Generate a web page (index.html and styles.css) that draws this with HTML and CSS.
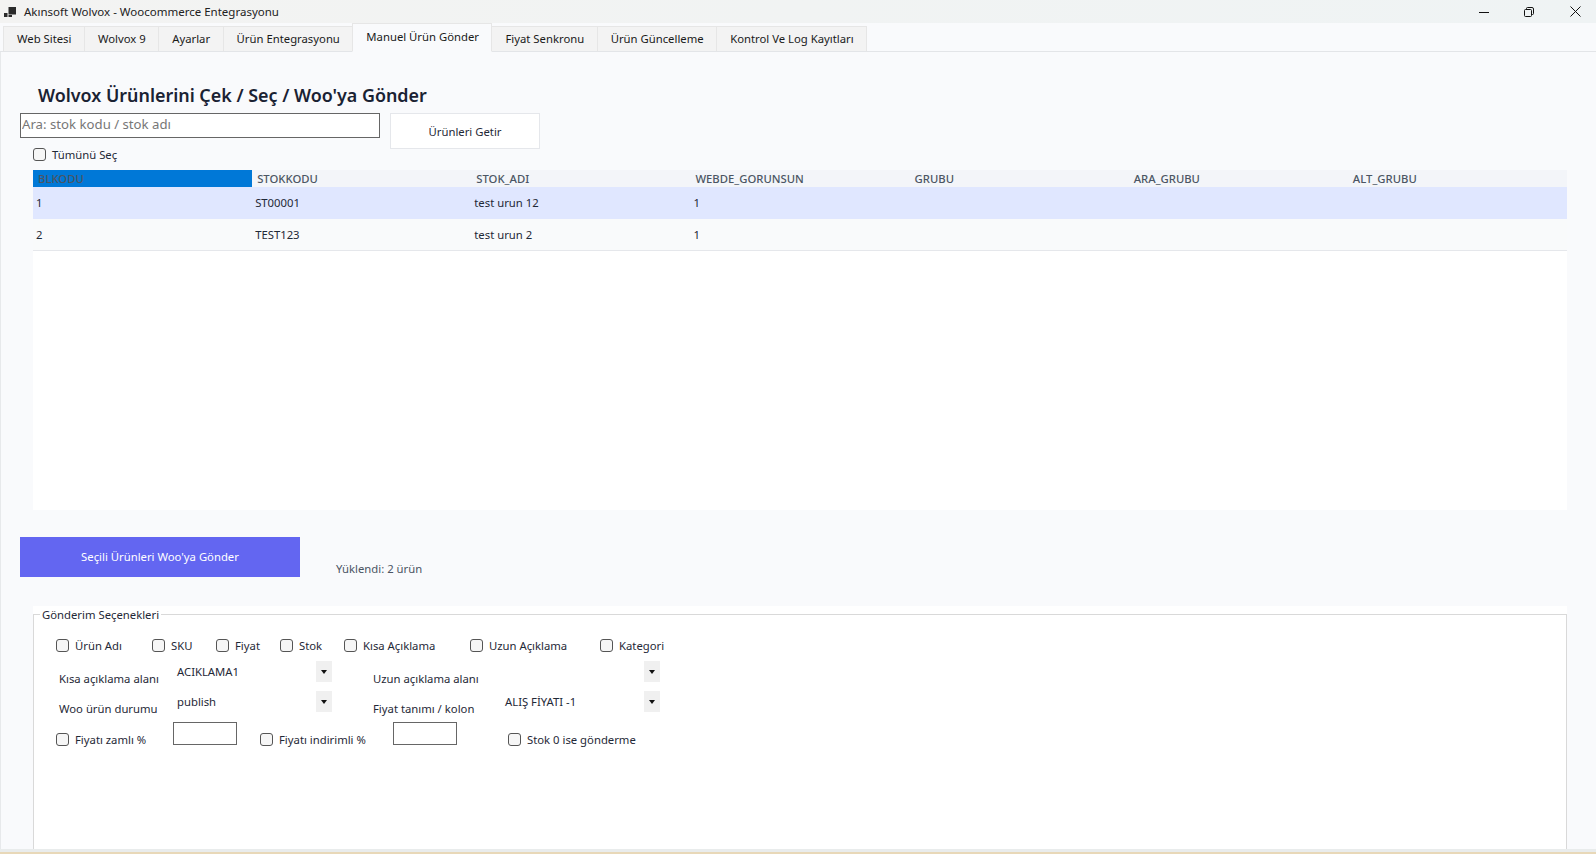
FILE: index.html
```html
<!DOCTYPE html>
<html>
<head>
  <meta charset="utf-8">
  <title>Akınsoft Wolvox - Woocommerce Entegrasyonu</title>
  <link rel="stylesheet" href="styles.css">
</head>
<body>
  <div class="window">
    <div class="titlebar">
      <svg class="app-icon" width="12" height="10" viewBox="0 0 12 10">
        <rect x="0" y="6" width="3.5" height="4" fill="#2b2b2b"/>
        <rect x="4.5" y="0" width="7.5" height="7.5" fill="#2b2b2b"/>
        <rect x="4.5" y="8" width="3.5" height="2" fill="#2b2b2b"/>
      </svg>
      <span class="title-text">Akınsoft Wolvox - Woocommerce Entegrasyonu</span>
      <div class="win-buttons">
        <svg width="10" height="10" viewBox="0 0 10 10"><path d="M0 5.5H10" stroke="#111" fill="none"/></svg>
        <svg width="10" height="10" viewBox="0 0 10 10"><path d="M2.5 2V1.5Q2.5 .5 3.5 .5H8Q9.5 .5 9.5 2V6.5Q9.5 7.5 8.5 7.5H8M1.5 2.5H6.5Q7.5 2.5 7.5 3.5V8.5Q7.5 9.5 6.5 9.5H1.5Q.5 9.5 .5 8.5V3.5Q.5 2.5 1.5 2.5Z" stroke="#111" fill="none"/></svg>
        <svg class="win-close" width="11" height="11" viewBox="0 0 11 11"><path d="M.5 .5L10.5 10.5M10.5 .5L.5 10.5" stroke="#111" fill="none"/></svg>
      </div>
    </div>

    <div class="tabs">
      <div class="tab">Web Sitesi</div>
      <div class="tab">Wolvox 9</div>
      <div class="tab">Ayarlar</div>
      <div class="tab">Ürün Entegrasyonu</div>
      <div class="tab active">Manuel Ürün Gönder</div>
      <div class="tab">Fiyat Senkronu</div>
      <div class="tab">Ürün Güncelleme</div>
      <div class="tab">Kontrol Ve Log Kayıtları</div>
    </div>

    <div class="main">
      <h1>Wolvox Ürünlerini Çek / Seç / Woo'ya Gönder</h1>

      <div class="search-row">
        <input class="search-input" type="text" placeholder="Ara: stok kodu / stok adı">
        <button class="fetch-button">Ürünleri Getir</button>
      </div>

      <label class="check select-all"><input type="checkbox">Tümünü Seç</label>

      <div class="grid-wrap">
        <table class="products">
          <thead>
            <tr>
              <th class="current">BLKODU</th>
              <th>STOKKODU</th>
              <th>STOK_ADI</th>
              <th>WEBDE_GORUNSUN</th>
              <th>GRUBU</th>
              <th>ARA_GRUBU</th>
              <th>ALT_GRUBU</th>
            </tr>
          </thead>
          <tbody>
            <tr class="selected">
              <td>1</td><td>ST00001</td><td>test urun 12</td><td>1</td><td></td><td></td><td></td>
            </tr>
            <tr>
              <td>2</td><td>TEST123</td><td>test urun 2</td><td>1</td><td></td><td></td><td></td>
            </tr>
          </tbody>
        </table>
      </div>

      <div class="send-row">
        <button class="send-button">Seçili Ürünleri Woo'ya Gönder</button>
        <span class="send-status">Yüklendi: 2 ürün</span>
      </div>

      <div class="options-wrap">
        <fieldset class="options">
          <legend>Gönderim Seçenekleri</legend>

          <div class="check-row">
            <label class="check w-96"><input type="checkbox">Ürün Adı</label>
            <label class="check w-64"><input type="checkbox">SKU</label>
            <label class="check w-64"><input type="checkbox">Fiyat</label>
            <label class="check w-64"><input type="checkbox">Stok</label>
            <label class="check w-126"><input type="checkbox">Kısa Açıklama</label>
            <label class="check w-130"><input type="checkbox">Uzun Açıklama</label>
            <label class="check"><input type="checkbox">Kategori</label>
          </div>

          <div class="field-grid">
            <span class="field-label">Kısa açıklama alanı</span>
            <div class="combo"><span class="combo-text">ACIKLAMA1</span><span class="combo-arrow"></span></div>
            <span class="field-label">Uzun açıklama alanı</span>
            <div class="combo"><span class="combo-text"></span><span class="combo-arrow"></span></div>

            <span class="field-label">Woo ürün durumu</span>
            <div class="combo"><span class="combo-text">publish</span><span class="combo-arrow"></span></div>
            <span class="field-label">Fiyat tanımı / kolon</span>
            <div class="combo"><span class="combo-text">ALIŞ FİYATI -1</span><span class="combo-arrow"></span></div>
          </div>

          <div class="price-row">
            <label class="check w-117"><input type="checkbox">Fiyatı zamlı %</label>
            <input class="percent-input gap-23" type="text">
            <label class="check w-133"><input type="checkbox">Fiyatı indirimli %</label>
            <input class="percent-input gap-51" type="text">
            <label class="check"><input type="checkbox">Stok 0 ise gönderme</label>
          </div>
        </fieldset>
      </div>
    </div>

    <div class="bottom-edge"></div>
  </div>
</body>
</html>
```

FILE: styles.css
```css
html, body {
  margin: 0;
  height: 100%;
  overflow: hidden;
}

body {
  font-family: "Noto Sans", "Open Sans", sans-serif;
  font-size: 11.3px;
  color: #1f2937;
  background-color: #f9fafc;
}

.window {
  display: flex;
  flex-direction: column;
  height: 854px;
}

/* Title bar */
.titlebar {
  display: flex;
  align-items: center;
  height: 23px;
  flex-shrink: 0;
  background: linear-gradient(to right, #f3f3f2, #eff3f4);
  color: #222;
}

.app-icon {
  margin-left: 4px;
  margin-right: 8px;
}

.title-text {
  font-size: 11.5px;
}

.win-buttons {
  display: flex;
  align-items: center;
  gap: 35px;
  margin-left: auto;
  padding-right: 15px;
}

.win-close {
  margin-left: 1px;
}

/* Tabs */
.tabs {
  display: flex;
  align-items: flex-end;
  height: 29px;
  flex-shrink: 0;
  box-sizing: border-box;
  padding-left: 3px;
  border-bottom: 1px solid #e3e5e8;
}

.tab {
  height: 26px;
  box-sizing: border-box;
  margin-bottom: -1px;
  padding: 4px 12.5px 0 13px;
  background-color: #f3f3f3;
  border: 1px solid #e6e6e6;
  border-bottom: 1px solid #e3e5e8;
  margin-right: -1px;
  color: #1a1a1a;
  white-space: nowrap;
}

.tab.active {
  height: 29px;
  padding-top: 5px;
  background-color: #f9fafc;
  border-bottom-color: #f9fafc;
  position: relative;
}

/* Main panel */
.main {
  display: flex;
  flex-direction: column;
  flex-grow: 1;
  box-shadow: inset 1px 0 #e7e9eb;
}

h1 {
  margin: 0 0 5px 38px;
  padding-top: 31px;
  font-size: 17.9px;
  font-weight: 600;
  line-height: 25px;
  color: #1a2233;
}

.search-row {
  display: flex;
  align-items: flex-start;
  gap: 10px;
  height: 36px;
  padding-left: 20px;
}

.search-input {
  width: 360px;
  height: 25px;
  box-sizing: border-box;
  padding: 0 1px 3px 1px;
  border: 1px solid #666;
  background-color: #fff;
  font-family: inherit;
  font-size: 13.2px;
  color: #111;
  outline: none;
}

.search-input::placeholder {
  color: #777;
  opacity: 1;
}

.fetch-button {
  width: 150px;
  height: 36px;
  background-color: #fff;
  border: 1px solid #e5e7eb;
  font-family: inherit;
  font-size: 11.3px;
  color: #1f2937;
}

/* Checkboxes */
.check {
  display: flex;
  align-items: center;
  height: 17px;
  flex-shrink: 0;
  color: #1f2937;
  white-space: nowrap;
}

.check input {
  appearance: none;
  width: 13px;
  height: 13px;
  box-sizing: border-box;
  margin: 0 6px 0 0;
  border: 1px solid #555;
  border-radius: 3px;
  background-color: #f6f6f6;
}

.select-all {
  height: 21px;
  box-sizing: border-box;
  padding-bottom: 11px;
  margin-left: 33px;
}

.w-64 { width: 64px; }
.w-96 { width: 96px; }
.w-117 { width: 117px; }
.w-126 { width: 126px; }
.w-130 { width: 130px; }
.w-133 { width: 133px; }

/* Product grid */
.grid-wrap {
  height: 340px;
  flex-shrink: 0;
  margin: 0 29px 0 33px;
  background-color: #fff;
}

.products {
  width: 100%;
  table-layout: fixed;
  border-collapse: collapse;
}

.products th {
  height: 17px;
  padding: 0 0 0 5px;
  background-color: #f3f5f9;
  font-weight: 500;
  text-align: left;
  color: #4b5563;
  line-height: 17px;
}

.products th.current {
  background-color: #0078d7;
}

.products td {
  height: 31px;
  padding: 0 0 0 3px;
  background-color: #f9fafb;
  border-bottom: 1px solid #e5e7eb;
  color: #1f2937;
}

.products tr.selected td {
  height: 32px;
  box-sizing: border-box;
  padding-bottom: 2px;
  background-color: #e0e7ff;
  border-bottom: none;
}

/* Send row */
.send-row {
  display: flex;
  align-items: flex-start;
  height: 40px;
  flex-shrink: 0;
  margin: 27px 0 29px 20px;
}

.send-button {
  width: 280px;
  height: 40px;
  padding: 0 0 2px 0;
  border: none;
  background-color: #6366f1;
  color: #fff;
  font-family: inherit;
  font-size: 11.3px;
}

.send-status {
  margin: 24px 0 0 36px;
  color: #4b5563;
}

/* Options group */
.options-wrap {
  height: 243px;
  flex-shrink: 0;
  box-sizing: border-box;
  margin: 0 29px 0 33px;
  background-color: #fff;
}

.options {
  height: 100%;
  box-sizing: border-box;
  margin: 0;
  padding: 14px 0 0 22px;
  border: 1px solid #d9d9d9;
  border-bottom: none;
  min-width: 0;
}

.options legend {
  margin-left: -16px;
  padding: 0 2px;
  line-height: 17px;
  color: #1f2937;
}

.check-row {
  display: flex;
  align-items: center;
}

.field-grid {
  display: grid;
  grid-template-columns: 118px 196px 132px 155px;
  grid-auto-rows: 30px;
  margin: 7px 0 0 3px;
}

.field-label {
  margin-top: 9px;
  line-height: 17px;
  color: #1f2937;
}

.combo {
  display: flex;
  align-items: center;
  justify-content: space-between;
  width: 155px;
  height: 21px;
}

.combo-text {
  line-height: 17px;
  color: #1f2937;
}

.combo-arrow {
  display: flex;
  align-items: center;
  justify-content: center;
  width: 16px;
  height: 21px;
  background-color: #f0f0f0;
}

.combo-arrow::after {
  content: "";
  border-left: 3.5px solid transparent;
  border-right: 3.5px solid transparent;
  border-top: 4px solid #111;
}

.price-row {
  display: flex;
  align-items: flex-start;
  margin-top: 1px;
}

.price-row .check {
  margin-top: 9px;
}

.percent-input {
  width: 64px;
  height: 23px;
  box-sizing: border-box;
  flex-shrink: 0;
  border: 1px solid #666;
  background-color: #fff;
  outline: none;
}

.gap-23 { margin: 0 23px 0 0; }
.gap-51 { margin: 0 51px 0 0; }

.bottom-edge {
  height: 5px;
  flex-shrink: 0;
  box-sizing: border-box;
  background-color: #e9ecec;
  border-bottom: 2px solid #e8d8b8;
}
```
